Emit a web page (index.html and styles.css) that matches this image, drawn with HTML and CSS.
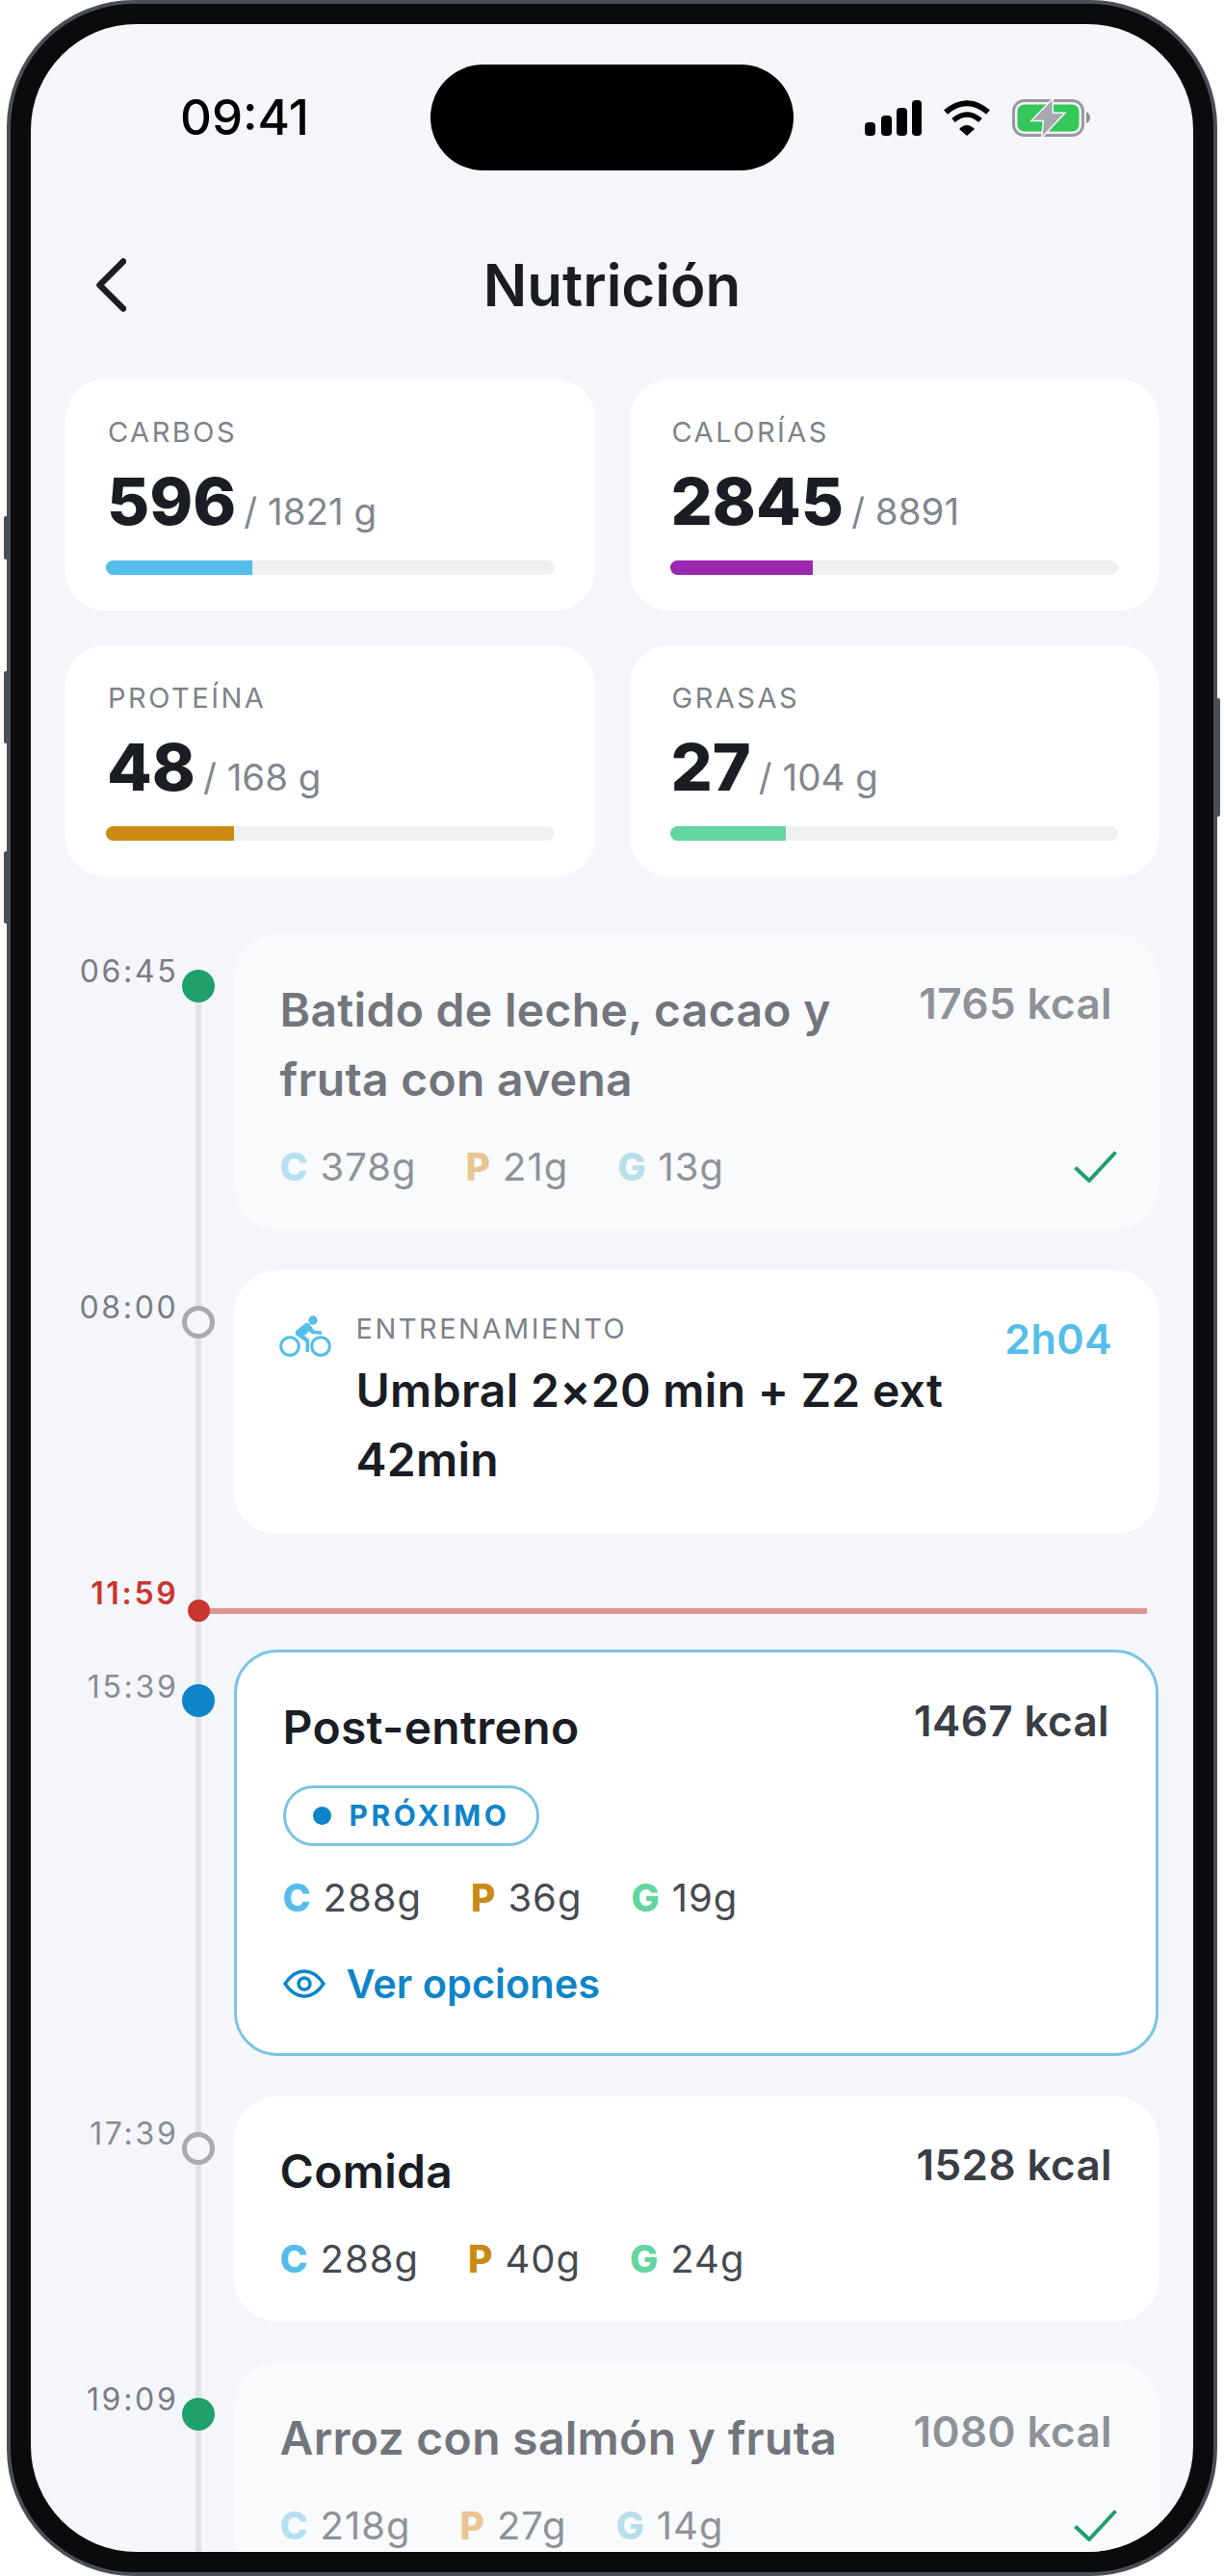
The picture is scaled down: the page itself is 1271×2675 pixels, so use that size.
FILE: index.html
```html
<!DOCTYPE html>
<html lang="es">
<head>
<meta charset="utf-8">
<title>Nutrición</title>
<link rel="stylesheet" href="styles.css">
</head>
<body>
<div class="phone">
  <span class="side side-a"></span>
  <span class="side side-b"></span>
  <span class="side side-c"></span>
  <span class="side side-d"></span>
  <div class="screen">
    <div class="status">
      <div class="clock">09:41</div>
      <div class="island"></div>
      <div class="status-icons">
        <svg class="i-signal" viewBox="0 0 59 37" width="59" height="37"><rect x="0" y="23" width="11" height="14" rx="4"/><rect x="17" y="16" width="11" height="21" rx="4"/><rect x="33" y="8" width="11" height="29" rx="4"/><rect x="49" y="0" width="10" height="37" rx="4"/></svg>
        <svg class="i-wifi" viewBox="0 0 50 37" width="50" height="37"><path d="M3 12.5Q25 -6 47 12.5" fill="none" stroke="#000" stroke-width="6"/><path d="M11 21Q25 9 39 21" fill="none" stroke="#000" stroke-width="5.5"/><path d="M17 30Q25 22 33 30L25 37Z"/></svg>
        <svg class="i-batt" viewBox="0 0 81 39" width="81" height="39"><rect x="1.5" y="1.5" width="72" height="36" rx="11" fill="none" stroke="#98999d" stroke-width="3"/><rect x="5.5" y="5.5" width="64" height="28" rx="7" fill="#34c759"/><path d="M77 13Q81 15 81 19Q81 23 77 25Z" fill="#8c8d90"/><path d="M41.6 1L21.6 21.7H33.3L31.6 38L53.3 15H41.6Z" fill="#a8a9ad" stroke="#f4f6fb" stroke-width="3" paint-order="stroke"/></svg>
      </div>
    </div>

    <header class="topbar">
      <svg class="back" viewBox="0 0 31 56" width="31" height="56"><path d="M28 3.5L3.5 28L28 52.5" fill="none" stroke="#1a1d24" stroke-width="6.500" stroke-linecap="round" stroke-linejoin="round"/></svg>
      <h1 class="title">Nutrición</h1>
      <span></span>
    </header>

    <section class="stats">
      <div class="stat">
        <div class="stat-label">CARBOS</div>
        <div class="stat-value"><strong>596</strong><span>/ 1821 g</span></div>
        <div class="bar"><div class="bar-fill fill-c" style="width:32.7%"></div></div>
      </div>
      <div class="stat">
        <div class="stat-label">CALORÍAS</div>
        <div class="stat-value"><strong>2845</strong><span>/ 8891</span></div>
        <div class="bar"><div class="bar-fill fill-k" style="width:32%"></div></div>
      </div>
      <div class="stat">
        <div class="stat-label">PROTEÍNA</div>
        <div class="stat-value"><strong>48</strong><span>/ 168 g</span></div>
        <div class="bar"><div class="bar-fill fill-p" style="width:28.6%"></div></div>
      </div>
      <div class="stat">
        <div class="stat-label">GRASAS</div>
        <div class="stat-value"><strong>27</strong><span>/ 104 g</span></div>
        <div class="bar"><div class="bar-fill fill-g" style="width:25.9%"></div></div>
      </div>
    </section>

    <section class="timeline">
      <div class="rail"></div>

      <div class="row">
        <div class="time">06:45</div>
        <div class="node"><span class="dot dot-done"></span></div>
        <article class="card card-done">
          <div class="card-top">
            <h2 class="meal">Batido de leche, cacao y fruta con avena</h2>
            <div class="kcal">1765 kcal</div>
          </div>
          <div class="macros-line">
            <div class="macros">
              <span class="macro"><b class="m-c">C</b>378g</span>
              <span class="macro"><b class="m-p">P</b>21g</span>
              <span class="macro"><b class="m-g">G</b>13g</span>
            </div>
            <svg class="check" viewBox="0 0 45 33" width="45" height="33"><path d="M1.5 17.5L16 31L43.5 1.5" fill="none" stroke="#1fa06b" stroke-width="4"/></svg>
          </div>
        </article>
      </div>

      <div class="row">
        <div class="time">08:00</div>
        <div class="node"><span class="dot dot-ring"></span></div>
        <article class="card card-train">
          <svg class="bike" viewBox="0 0 54 43" width="54" height="43"><circle cx="11" cy="32" r="9.3" fill="none" stroke="#54bde9" stroke-width="3"/><circle cx="43" cy="32" r="9.3" fill="none" stroke="#54bde9" stroke-width="3"/><circle cx="35" cy="5" r="4.7" fill="#54bde9"/><path d="M28 7.5C30.500 7.500 32 9 33 11L36 15.500L44 16.500V20L34 19L31 16.500L26 21L31 25V38H27.500V27.500L17.500 20.500C16 19 16.500 17 18 15.500Z" fill="#54bde9"/></svg>
          <div class="train-body">
            <div class="train-label">ENTRENAMIENTO</div>
            <h2 class="meal">Umbral 2×20 min + Z2 ext 42min</h2>
          </div>
          <div class="kcal kcal-train">2h04</div>
        </article>
      </div>

      <div class="row-now">
        <div class="time time-now">11:59</div>
        <div class="node-now"><span class="dot-now"></span></div>
        <div class="now-line"></div>
      </div>

      <div class="row">
        <div class="time time-next">15:39</div>
        <div class="node node-next"><span class="dot dot-next"></span></div>
        <article class="card card-next">
          <div class="card-top">
            <h2 class="meal">Post-entreno</h2>
            <div class="kcal">1467 kcal</div>
          </div>
          <div class="pill"><i class="pill-dot"></i>PRÓXIMO</div>
          <div class="macros">
            <span class="macro"><b class="m-c">C</b>288g</span>
            <span class="macro"><b class="m-p">P</b>36g</span>
            <span class="macro"><b class="m-g">G</b>19g</span>
          </div>
          <div class="options">
            <svg class="eye" viewBox="0 0 44 30" width="44" height="30"><path d="M2 15C8 6 14 2 22 2S36 6 42 15C36 24 30 28 22 28S8 24 2 15Z" fill="none" stroke="#0f84c8" stroke-width="3.5"/><circle cx="22" cy="15" r="6" fill="none" stroke="#0f84c8" stroke-width="3.5"/></svg>
            <span>Ver opciones</span>
          </div>
        </article>
      </div>

      <div class="row">
        <div class="time time-next">17:39</div>
        <div class="node"><span class="dot dot-ring"></span></div>
        <article class="card">
          <div class="card-top">
            <h2 class="meal">Comida</h2>
            <div class="kcal">1528 kcal</div>
          </div>
          <div class="macros">
            <span class="macro"><b class="m-c">C</b>288g</span>
            <span class="macro"><b class="m-p">P</b>40g</span>
            <span class="macro"><b class="m-g">G</b>24g</span>
          </div>
        </article>
      </div>

      <div class="row">
        <div class="time">19:09</div>
        <div class="node"><span class="dot dot-done"></span></div>
        <article class="card card-done">
          <div class="card-top">
            <h2 class="meal">Arroz con salmón y fruta</h2>
            <div class="kcal">1080 kcal</div>
          </div>
          <div class="macros-line">
            <div class="macros">
              <span class="macro"><b class="m-c">C</b>218g</span>
              <span class="macro"><b class="m-p">P</b>27g</span>
              <span class="macro"><b class="m-g">G</b>14g</span>
            </div>
            <svg class="check" viewBox="0 0 45 33" width="45" height="33"><path d="M1.5 17.5L16 31L43.5 1.5" fill="none" stroke="#1fa06b" stroke-width="4"/></svg>
          </div>
        </article>
      </div>
    </section>
  </div>
</div>
</body>
</html>
```
FILE: styles.css
```css
* { box-sizing: border-box; }
html, body { margin: 0; padding: 0; background: #fff; }
body { font-family: Inter, "Noto Sans", sans-serif; font-optical-sizing: none; font-variation-settings: "opsz" 14; color: #1a1d24; width: 1271px; height: 2675px; overflow: hidden; }

.phone { position: relative; width: 1257px; height: 2675px; margin-left: 7px; padding: 21px; background: #0a0b0d; border: 4px solid #4a4e57; border-radius: 132px; }
.side { position: absolute; width: 4px; background: #4a4e57; border-radius: 2px 0 0 2px; left: -7px; }
.side-a { top: 532px; height: 45px; }
.side-b { top: 693px; height: 75px; }
.side-c { top: 880px; height: 75px; }
.side-d { top: 721px; height: 123px; left: auto; right: -7px; border-radius: 0 2px 2px 0; }

.screen { width: 1207px; height: 2625px; background: #f4f6fb; border-radius: 110px; overflow: hidden; padding: 42px 36px 0; }

.status { display: grid; grid-template-columns: 1fr 377px 1fr; align-items: center; height: 110px; margin: 0 -36px; }
.clock { padding-left: 155px; font-size: 51px; font-weight: 500; line-height: 58px; color: #000; }
.island { height: 110px; background: #000; border-radius: 55px; }
.status-icons { display: flex; justify-content: flex-end; align-items: center; gap: 22px; padding-right: 107px; }
.status-icons svg { display: block; }

.topbar { display: grid; grid-template-columns: 1fr auto 1fr; align-items: center; height: 100px; margin: 69px 0 48px; }
.back { margin-left: 32px; display: block; }
.title { margin: 0; font-size: 60px; line-height: 100px; font-weight: 600; }

.stats { display: grid; grid-template-columns: 1fr 1fr; gap: 36px; }
.stat { background: #fff; border-radius: 41px; padding: 38px 42px 37px; }
.stat-label { font-size: 29px; line-height: 34px; letter-spacing: 2.5px; color: #7d828a; padding-left: 2px; }
.stat-value { display: flex; align-items: baseline; gap: 8px; height: 72px; margin-top: 18px; line-height: 72px; padding-left: 1px; }
.stat-value strong { font-size: 68px; font-weight: 800; line-height: 72px; }
.stat-value span { font-size: 38.5px; line-height: 39px; color: #82868e; }
.bar { height: 15px; margin-top: 26px; background: #eef0f2; border-radius: 8px; overflow: hidden; }
.bar-fill { height: 100%; }
.fill-c { background: #54bde9; }
.fill-k { background: #9c27b0; }
.fill-p { background: #c98a14; }
.fill-g { background: #62d5a0; }

.timeline { position: relative; margin-top: 60px; }
.rail { position: absolute; left: 135px; top: 54px; bottom: 0; width: 6px; background: #e0e3e7; }
.row { position: relative; display: grid; grid-template-columns: 114px 48px 1fr; margin-bottom: 42px; }
.time { padding-top: 21px; font-size: 32px; line-height: 36px; letter-spacing: 2.7px; text-align: right; color: #797c83; margin-right: -3.5px; }
.time-next { color: #888b91; }
.node { position: relative; padding-top: 37px; display: flex; justify-content: center; }
.node-next { padding-top: 35.5px; }
.dot { display: block; width: 34px; height: 34px; border-radius: 50%; }
.dot-done { background: #1fa06b; }
.dot-next { background: #0f84c8; }
.dot-ring { background: #f4f6fb; border: 5px solid #a9abb0; }

.card { margin-left: 12.5px; padding: 42.5px 48px 43px; background: #fff; border-radius: 45px; }
.card-done { background: #f9fafc; }
.card-done .meal { color: #72757b; }
.card-done .kcal { color: #8e9197; }
.card-done .macro { color: #8f9299; }
.card-done .m-c { color: #b5dff2; }
.card-done .m-p { color: #e8c592; }
.card-done .m-g { color: #b8dfe8; }
.card-top { display: flex; justify-content: space-between; align-items: flex-start; gap: 40px; }
.meal { margin: 0; font-size: 48px; line-height: 72px; font-weight: 600; letter-spacing: 0.3px; }
.kcal { flex: none; font-size: 44px; line-height: 58px; font-weight: 600; letter-spacing: 0.4px; color: #3a3e46; white-space: nowrap; }

.macros { display: flex; gap: 51px; margin-top: 33px; }
.macro { display: flex; align-items: baseline; gap: 13px; font-size: 40px; line-height: 44px; letter-spacing: 1px; color: #464a52; }
.macro b { font-size: 39px; font-weight: 800; letter-spacing: 0; }
.m-c { color: #54bde9; }
.m-p { color: #c98a14; }
.m-g { color: #62d5a0; }
.macros-line { display: flex; justify-content: space-between; align-items: flex-end; }
.check { display: block; margin-bottom: 6px; margin-right: -4.5px; }

.card-train { display: flex; padding: 44px 48px 41px; }
.bike { flex: none; display: block; margin: 3px 26px 0 -1px; }
.train-body { flex: 1; }
.train-label { font-size: 29px; line-height: 34px; letter-spacing: 2.5px; color: #7d828a; }
.train-body .meal { margin-top: 11px; }
.kcal-train { color: #54bde9; font-size: 43px; margin-top: -2px; }

.row-now { position: relative; display: grid; grid-template-columns: 114px 48px 1fr; height: 78.5px; }
.time-now { padding-top: 2.5px; color: #c9352f; font-weight: 600; }
.node-now { position: relative; z-index: 1; display: flex; justify-content: center; padding-top: 26.5px; }
.dot-now { display: block; width: 23px; height: 23px; border-radius: 50%; background: #c9352f; }
.now-line { height: 6px; margin: 35px 12px 0 -24px; background: #dd9594; }

.card-next { padding: 42px 48px 47px; border: 3px solid #7cc3e4; }
.pill { display: inline-flex; align-items: center; gap: 19px; height: 63px; margin-top: 23.5px; padding: 0 28px; border: 3px solid #7cc3e4; border-radius: 32px; font-size: 30px; font-weight: 700; letter-spacing: 3.5px; color: #0f84c8; vertical-align: top; }
.pill-dot { display: block; width: 19px; height: 19px; border-radius: 50%; background: #0f84c8; }
.card-next .macros { margin-top: 32.5px; }
.options { display: flex; align-items: center; gap: 22px; height: 50px; margin-top: 41.5px; font-size: 41.5px; font-weight: 600; color: #0f84c8; }
.eye { display: block; flex: none; }
```
